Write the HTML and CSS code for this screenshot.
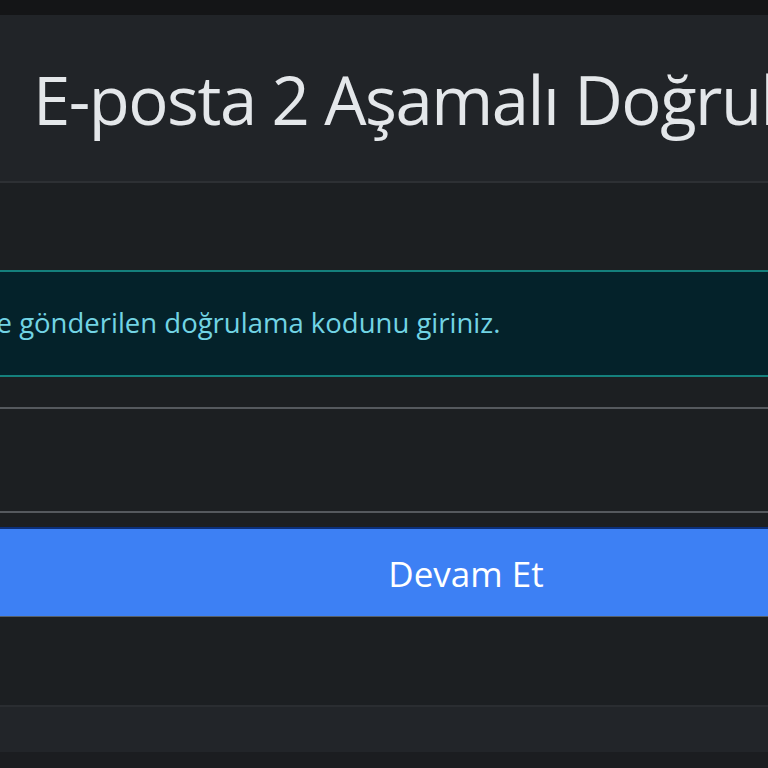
FILE: index.html
```html
<!DOCTYPE html>
<html lang="tr">
<head>
<meta charset="utf-8">
<title>E-posta 2 Aşamalı Doğrulama</title>
<link rel="stylesheet" href="styles.css">
</head>
<body>
<div class="page">
  <div class="top-strip"></div>
  <div class="card">
    <div class="card-header">
      <h1 class="title">E-posta 2 Aşamalı Doğrulama</h1>
    </div>
    <div class="card-body">
      <div class="alert">
        <p class="alert-text"><span class="clip"><span>E-posta adresinize</span></span> gönderilen doğrulama kodunu giriniz.</p>
      </div>
      <div class="field">
        <input class="input" type="text" aria-label="Doğrulama kodu">
      </div>
      <button class="btn" type="button">Devam Et</button>
    </div>
    <div class="card-footer"></div>
  </div>
</div>
</body>
</html>
```

FILE: styles.css
```css
* { box-sizing: border-box; }
html, body { margin: 0; padding: 0; }
body {
  background: #1b1d20;
  font-family: "Open Sans", "Noto Sans", "Liberation Sans", sans-serif;
  width: 768px;
  height: 768px;
  overflow: hidden;
}
.page {
  width: 768px;
  overflow: hidden;
}
.top-strip {
  height: 15px;
  background: #141517;
}
.card {
  display: flex;
  flex-direction: column;
  background: #1c1f22;
}
.card-header {
  background: #212428;
  height: 168px;
  border-bottom: 2px solid #2d3034;
  display: flex;
  align-items: center;
  padding-left: 33px;
  white-space: nowrap;
  overflow: hidden;
}
.title {
  margin: 0;
  font-size: 67px;
  font-weight: 400;
  color: #e4e7ea;
  line-height: 1.2;
  letter-spacing: -1.5px;
  padding-top: 2px;
}
.card-body {
  padding: 87px 0 88px 0;
  display: flex;
  flex-direction: column;
}
.alert {
  background: #04222a;
  border-top: 2px solid #14807c;
  border-bottom: 2px solid #14807c;
  height: 107px;
  display: flex;
  align-items: center;
  overflow: hidden;
  white-space: nowrap;
}
.alert-text {
  margin: 0;
  font-size: 27.5px;
  line-height: 38px;
  color: #72d4e4;
  padding-bottom: 2px;
}
.clip {
  display: inline-block;
  width: 12px;
  overflow: hidden;
  direction: rtl;
  vertical-align: top;
}
.clip span {
  direction: ltr;
  unicode-bidi: isolate;
}
.field {
  margin-top: 30px;
}
.input {
  display: block;
  width: 100%;
  height: 106px;
  background: #1c1f22;
  border: none;
  border-top: 2px solid #55595e;
  border-bottom: 2px solid #55595e;
  outline: none;
  font-family: inherit;
  font-size: 28px;
  color: #dee2e6;
  padding: 0 28px;
}
.btn {
  display: block;
  margin-top: 14px;
  width: 100%;
  height: 90px;
  background: #3d80f4;
  border: none;
  border-top: 2px solid #0b2f7a;
  border-bottom: 1px solid #56606a;
  color: #ffffff;
  font-family: inherit;
  font-size: 35px;
  padding: 2px 0 0 164px;
  text-align: center;
  cursor: pointer;
}
.card-footer {
  height: 47px;
  background: #222529;
  border-top: 2px solid #2a2d31;
}
```
